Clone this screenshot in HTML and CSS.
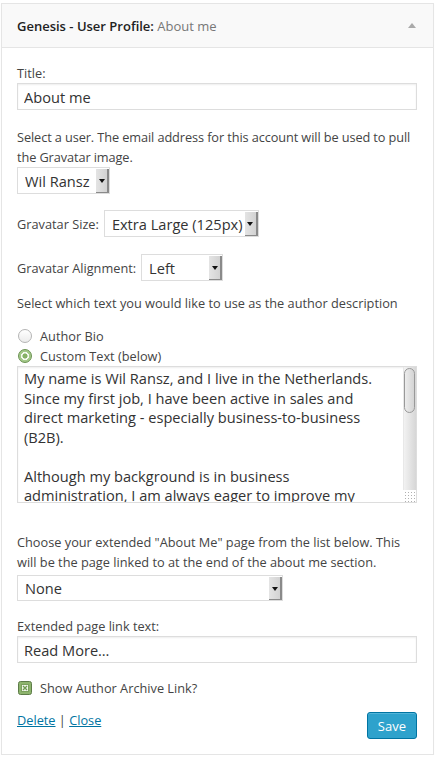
FILE: index.html
```html
<!DOCTYPE html>
<html lang="en">
<head>
    <meta charset="UTF-8">
    <meta name="viewport" content="width=device-width, initial-scale=1.0">
    <title>Widgets</title>
    <link rel="stylesheet" href="styles.css">
</head>
<body>

    <div class="widget">
        <div class="widget-top">
            <h3 class="widget-title">Genesis - User Profile:<span class="in-title"> About me</span></h3>
            <span class="toggle"></span>
        </div>

        <div class="widget-inside">
            <p class="field field-title">
                <label class="field-label" for="title">Title:</label>
                <input class="widefat" id="title" type="text" value="About me">
            </p>

            <div class="field field-user">
                <p class="help">Select a user. The email address for this account will be used to pull the Gravatar image.</p>
                <div class="select select-user">
                    <select><option>Wil Ransz</option></select>
                    <span class="select-arrow"></span>
                </div>
            </div>

            <div class="field field-row field-size">
                <label>Gravatar Size:</label>
                <div class="select select-size">
                    <select><option>Extra Large (125px)</option></select>
                    <span class="select-arrow"></span>
                </div>
            </div>

            <div class="field field-row field-align">
                <label>Gravatar Alignment:</label>
                <div class="select select-align">
                    <select><option>Left</option></select>
                    <span class="select-arrow"></span>
                </div>
            </div>

            <p class="help field-desc">Select which text you would like to use as the author description</p>

            <div class="field field-bio">
                <label class="choice"><input type="radio" name="bio"> Author Bio</label>
                <label class="choice"><input type="radio" name="bio" checked> Custom Text (below)</label>

                <!-- textarea with the old-style scrollbar drawn beside it -->
                <div class="bio-box">
                    <textarea class="bio-text">My name is Wil Ransz, and I live in the Netherlands. Since my first job, I have been active in sales and direct marketing - especially business-to-business (B2B).

Although my background is in business administration, I am always eager to improve my knowledge of online marketing, websites and social media.

In my spare time I like to read, travel and spend time with my family. On this blog I share what I learn along the way, with tips you can use for your own business.</textarea>
                    <div class="scrollbar">
                        <div class="scroll-track"><span class="scroll-thumb"></span></div>
                        <span class="resizer"></span>
                    </div>
                </div>
            </div>

            <div class="field field-page">
                <p class="help">Choose your extended "About Me" page from the list below. This will be the page linked to at the end of the about me section.</p>
                <div class="select select-page">
                    <select><option>None</option></select>
                    <span class="select-arrow"></span>
                </div>
            </div>

            <p class="field field-more">
                <label class="field-label" for="more">Extended page link text:</label>
                <input class="widefat" id="more" type="text" value="Read More…">
            </p>

            <label class="choice field-archive">
                <span class="checkbox">
                    <svg width="14" height="14" viewBox="0 0 14 14">
                        <rect x="0.5" y="0.5" width="13" height="13" rx="2" fill="#8db46d" stroke="#5d7c48"/>
                        <rect x="3.5" y="3.5" width="7" height="7" fill="#eef4e8" stroke="#7ba05d"/>
                        <path d="M5 5l4 4M9 5l-4 4" stroke="#6f9a52" stroke-width="1.3"/>
                    </svg>
                </span>
                Show Author Archive Link?
            </label>

            <div class="widget-control-actions">
                <div class="links">
                    <a href="#delete">Delete</a> | <a href="#close">Close</a>
                </div>
                <button class="button-primary">Save</button>
            </div>
        </div>
    </div>

</body>
</html>
```

FILE: styles.css
```css
body {
    margin: 0;
    padding: 3px 0 0 1px;
    background-color: #fff;
    font-family: 'Open Sans', sans-serif;
    font-size: 12.75px;
    color: #444;
}

.widget {
    width: 433px;
    box-sizing: border-box;
    border: 1px solid #e5e5e5;
    background-color: #fff;
    box-shadow: 0 1px 1px rgba(0, 0, 0, 0.04);
}

/* header bar */
.widget-top {
    height: 43px;
    display: flex;
    align-items: center;
    justify-content: space-between;
    padding: 0 17px 0 15px;
    background-color: #f9f9f9;
    border-bottom: 1px solid #e5e5e5;
}

.widget-title {
    margin: 0;
    font-size: 13px;
    font-weight: 600;
    line-height: 20px;
    color: #222;
}

.in-title {
    font-weight: 400;
    color: #777;
}

.toggle {
    width: 0;
    height: 0;
    border-left: 4px solid transparent;
    border-right: 4px solid transparent;
    border-bottom: 5px solid #aaa;
}

/* form body */
.widget-inside {
    padding: 16px 16px 15px 15px;
}

.field {
    margin: 0;
}

.help {
    margin: 0;
    line-height: 20px;
}

.field-user .help {
    letter-spacing: -0.1px;
}

.field-label {
    display: block;
    line-height: 19px;
}

.widefat {
    display: block;
    width: 100%;
    height: 27px;
    box-sizing: border-box;
    margin: 0;
    padding: 0 6px;
    border: 1px solid #ddd;
    box-shadow: inset 0 1px 2px rgba(0, 0, 0, 0.07);
    font-family: 'Open Sans', sans-serif;
    font-size: 14.6px;
    color: #333;
    outline: none;
}

.field-title { margin-bottom: 17px; }
.field-user { margin-bottom: 16px; }
.field-size { margin-bottom: 17px; }
.field-align { margin-bottom: 12px; }
.field-desc { margin-bottom: 13px; }
.field-bio { margin-bottom: 29px; }
.field-page { margin-bottom: 16px; }
.field-more { margin-bottom: 15px; }
.field-archive { margin-bottom: 12px; }

.field-row {
    display: flex;
    align-items: center;
    gap: 5px;
}

/* selects with the grey drop button */
.select {
    display: flex;
    height: 27px;
    box-sizing: border-box;
    border: 1px solid #ddd;
    background-color: #fff;
}

.select select {
    flex: 1;
    min-width: 0;
    appearance: none;
    border: 0;
    margin: 0;
    padding: 0 0 0 7px;
    background: transparent;
    font-family: 'Open Sans', sans-serif;
    font-size: 14.6px;
    color: #333;
    outline: none;
}

.select-arrow {
    width: 13px;
    margin: 1px 0 0;
    display: flex;
    align-items: center;
    justify-content: center;
    background: linear-gradient(to right, #e4e4e4, #cfcfcf);
    box-shadow: inset -2px -1px 0 #8a8a8a;
}

.select-arrow::after {
    content: "";
    width: 0;
    height: 0;
    margin-left: -2px;
    border-left: 3px solid transparent;
    border-right: 3px solid transparent;
    border-top: 4px solid #111;
}

.select-user { width: 93px; }
.select-size { width: 155px; }
.select-align { width: 82px; }
.select-page { width: 266px; margin-top: 3px; height: 26px; }

/* radios and checkbox */
.choice {
    display: flex;
    align-items: center;
    gap: 8px;
    line-height: 20px;
    padding-left: 1px;
}

.choice input[type="radio"] {
    appearance: none;
    width: 14px;
    height: 14px;
    margin: 0;
    border-radius: 50%;
    border: 1px solid #b4b4b4;
    background: linear-gradient(#fff, #ececec);
    box-sizing: border-box;
}

.choice input[type="radio"]:checked {
    border-color: #6a9150;
    background: radial-gradient(circle, #86b166 0 2.3px, #f6f9f2 2.8px 3.8px, #a4c98a 4.3px);
}

.checkbox {
    display: block;
    width: 14px;
    height: 14px;
}

.checkbox svg {
    display: block;
}

/* textarea box */
.bio-box {
    display: flex;
    height: 137px;
    box-sizing: border-box;
    border: 1px solid #ddd;
    box-shadow: inset 0 1px 2px rgba(0, 0, 0, 0.07);
}

.bio-text {
    flex: 1;
    min-width: 0;
    margin: 0;
    padding: 2px 24px 0 6px;
    border: 0;
    background: transparent;
    font-family: 'Open Sans', sans-serif;
    font-size: 14.6px;
    line-height: 19.5px;
    color: #333;
    resize: none;
    overflow: hidden;
    outline: none;
}

.scrollbar {
    width: 13px;
    display: flex;
    flex-direction: column;
}

.scroll-track {
    flex: 1;
    padding: 1px 0 0;
    background: linear-gradient(to right, #f2f2f2, #d6d6d6);
    border-left: 1px solid #e8e8e8;
}

.scroll-thumb {
    display: block;
    height: 45px;
    margin: 0 1px 0 0;
    box-sizing: border-box;
    border: 1px solid #999;
    border-radius: 6px;
    background: linear-gradient(to right, #ececec, #d4d4d4);
}

.resizer {
    height: 12px;
    background: radial-gradient(circle, #b0b0b0 0.7px, transparent 1px) 1px 1px / 3px 3px #fff;
}

/* footer links and save */
.widget-control-actions {
    display: flex;
    justify-content: space-between;
    align-items: flex-start;
}

.links {
    line-height: 20px;
    color: #444;
}

.links a {
    color: #0074a2;
    text-decoration: underline;
}

.button-primary {
    height: 27px;
    margin-top: 2px;
    padding: 0 10px;
    border: 1px solid #0074a2;
    border-radius: 3px;
    background-color: #2ea2cc;
    box-shadow: inset 0 1px 0 rgba(120, 200, 230, 0.5);
    font-family: 'Open Sans', sans-serif;
    font-size: 13px;
    color: #fff;
    cursor: pointer;
}
```
